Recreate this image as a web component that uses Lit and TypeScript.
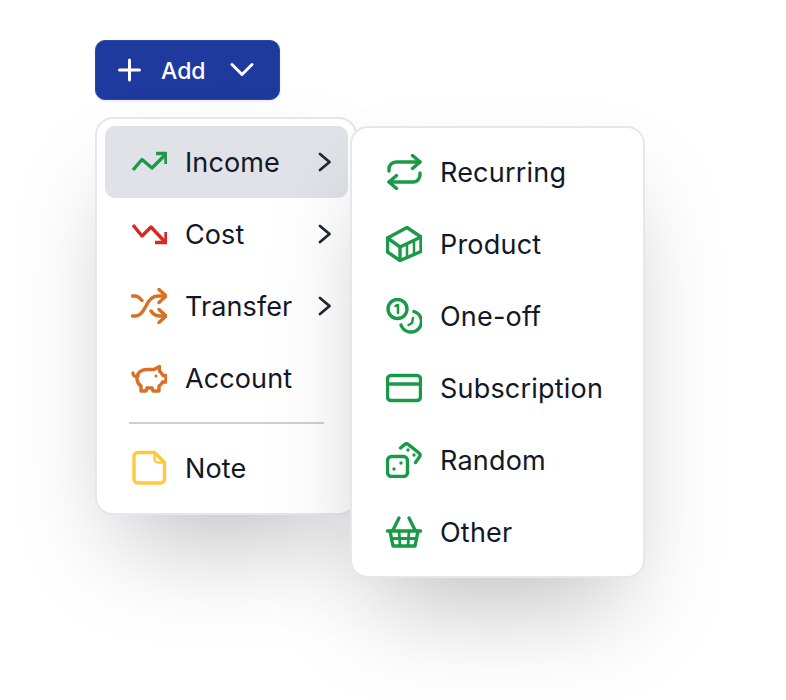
import { LitElement, html, css, svg } from "lit";
import { customElement } from "lit/decorators.js";

const icon = (cls: string, body: unknown) =>
  html`<svg class="ic ${cls}" viewBox="0 0 36 36" fill="none" stroke="currentColor" stroke-width="3.4" stroke-linecap="round" stroke-linejoin="round">${body}</svg>`;

const up = svg`<path stroke-linecap="butt" d="M2 26 11 15.500 21 24 35 10"/><path stroke-linecap="butt" stroke-linejoin="miter" d="M25 9.500H35V20"/>`;
const down = svg`<path stroke-linecap="butt" d="M2 9 11 20 20 11 35 27"/><path stroke-linecap="butt" stroke-linejoin="miter" d="M24 26.500H35V16"/>`;
const shuffle = svg`<path d="M1.500 28H4C10 28 12 23 15 18 18 12 21 8 28 8H35"/><path d="M1.500 8H4C7 8 9 10 11 12.500"/><path d="M20 23C22 26 25 28 29 28H35"/><path d="M28 1.500 35 8 28 14.500"/><path d="M28 21.500 35 28 28 34.500"/>`;
const pig = svg`<path d="M28.500 6.500 23 9.500H16C10 9.500 5.500 13 6 19 6.300 23 8.500 25 10 26V31H15L16 28H21L22 31H28V26C30 25 31 23.500 31.500 22H35V15.500H32C31 13.500 29.500 12 28.500 11Z"/><path d="M2 13C2 16 4.500 17 7 16"/><circle cx="25" cy="16" r=".8" fill="currentColor" stroke-width="1.500"/>`;
const note = svg`<path d="M7 2.500H23.500L33.500 12.500V29A4 4 0 0 1 29.500 33H7A4 4 0 0 1 3 29V6.500A4 4 0 0 1 7 2.500Z"/><path d="M23.500 3V9A3.500 3.500 0 0 0 27 12.500H33" stroke-width="2.500"/>`;
const recurring = svg`<path d="M34 8H10A7 7 0 0 0 3 15V17"/><path d="M26.500 1.500 34 8 26.500 14.500"/><path d="M3 28H27A7 7 0 0 0 34 21V19"/><path d="M10.500 21.500 3 28 10.500 34.500"/>`;
const box = svg`<path d="M21 1.500 35 11V25.500L14 34.500 1.500 26V12Z"/><path d="M1.500 12 14 21 35 11"/><path d="M14 21V34"/><path d="M21 18V31M28 14.500V28" stroke-width="2.500"/>`;
const coins = svg`<circle cx="11.500" cy="11" r="9.500"/><path d="M9.500 8 12 7V15" stroke-width="2.500"/><path d="M28 13.500A10.500 10.500 0 1 1 15 27"/><path d="M22.500 27 26 25 27 20" stroke-width="2.500"/>`;
const card = svg`<rect x="1.500" y="5.500" width="33" height="25" rx="3.500"/><path d="M1.500 14H34.500"/>`;
const dice = svg`<rect x="1.500" y="14.500" width="20" height="20" rx="4"/><path d="M14.500 6 18.500 2.600A3 3 0 0 1 22.500 2.600L33 11A3 3 0 0 1 33.400 15L29.500 20.500"/><g fill="currentColor" stroke="none"><circle cx="8" cy="27" r="1.700"/><circle cx="15" cy="21" r="1.700"/><circle cx="22" cy="8" r="1.700"/><circle cx="28" cy="13" r="1.700"/></g>`;
const basket = svg`<path d="M13 4 7 16M23 4 29 16"/><path d="M1.500 17H34.500"/><path d="M4 17 7 32H29L32 17"/><path d="M5.500 24.500H30.500M13 17 14 32M23 17 22 32" stroke-width="2.800"/>`;

const chevron = html`<svg class="chev" viewBox="0 0 14 20" fill="none" stroke="currentColor" stroke-width="2.800" stroke-linecap="round" stroke-linejoin="round"><path d="M2 2 11.500 10 2 18"/></svg>`;

@customElement("app-root")
export class AppRoot extends LitElement {
  static styles = css`
    :host {
      display: block;
      height: 700px;
      overflow: hidden;
      padding: 40px 0 0 95px;
      box-sizing: border-box;
      font-family: Inter, "Liberation Sans", sans-serif;
      color: #111827;
    }
    .wrap { position: relative; width: 185px; }
    .add {
      display: flex;
      align-items: center;
      box-sizing: border-box;
      width: 185px;
      height: 60px;
      padding: 0 0 0 21px;
      background: #1e3a9f;
      border: 1px solid #2b49ad;
      border-radius: 10px;
      color: #fff;
      font-family: inherit;
      font-size: 23px;
      font-weight: 500;
      box-shadow: 0 1px 3px rgba(0,0,0,.1);
    }
    .add span { padding-top: 2px; }
    .plus { width: 24px; height: 24px; margin-right: 20px; }
    .down { width: 26px; height: 16px; margin-left: 24px; }
    .menu {
      position: absolute;
      box-sizing: border-box;
      background: #fff;
      border: 2px solid #e5e7eb;
      border-radius: 18px;
      padding: 7px 7px 7px 8px;
      box-shadow: 0 50px 100px -24px rgba(0,0,0,.25);
    }
    .main { left: 0; top: 77px; width: 262px; height: 398px; }
    .sub { left: 253px; top: 7px; width: 295px; height: 452px; padding: 8px 9px 8px 10px; z-index: 2; }
    .row {
      display: flex;
      align-items: center;
      height: 72px;
      box-sizing: border-box;
      padding: 0 16px 0 26px;
      gap: 18px;
      border-radius: 10px;
      font-size: 27px;
      letter-spacing: .1px;
      white-space: nowrap;
    }
    .sub .row { padding-left: 24px; letter-spacing: .2px; }
    .row.active { background: #e0e2e8; }
    .label { flex: 1; }
    .ic { width: 36px; height: 36px; flex: none; }
    .chev { width: 14px; height: 20px; flex: none; color: #1f2937; }
    .green { color: #1a9a48; }
    .red { color: #dc2626; }
    .orange { color: #d97024; }
    .yellow { color: #fcc93f; }
    .sep { height: 2px; margin: 8px 24px 8px 24px; background: #cbd0d6; }
  `;

  render() {
    const row = (ic: unknown, label: string, more = false, active = false) => html`
      <div class="row ${active ? "active" : ""}">${ic}<span class="label">${label}</span>${more ? chevron : ""}</div>`;
    return html`
      <div class="wrap">
        <button class="add">
          <svg class="plus" viewBox="0 0 24 24" fill="none" stroke="currentColor" stroke-width="3" stroke-linecap="round"><path d="M12.500 2V22M2.500 12H22.500"/></svg>
          <span>Add</span>
          <svg class="down" viewBox="0 0 26 16" fill="none" stroke="currentColor" stroke-width="3" stroke-linecap="round" stroke-linejoin="round"><path d="M2 2.500 12 12.500 22 2.500"/></svg>
        </button>
        <div class="menu main">
          ${row(icon("green", up), "Income", true, true)}
          ${row(icon("red", down), "Cost", true)}
          ${row(icon("orange", shuffle), "Transfer", true)}
          ${row(icon("orange", pig), "Account")}
          <div class="sep"></div>
          ${row(icon("yellow", note), "Note")}
          <div class="menu sub">
            ${row(icon("green", recurring), "Recurring")}
            ${row(icon("green", box), "Product")}
            ${row(icon("green", coins), "One-off")}
            ${row(icon("green", card), "Subscription")}
            ${row(icon("green", dice), "Random")}
            ${row(icon("green", basket), "Other")}
          </div>
        </div>
      </div>`;
  }
}
